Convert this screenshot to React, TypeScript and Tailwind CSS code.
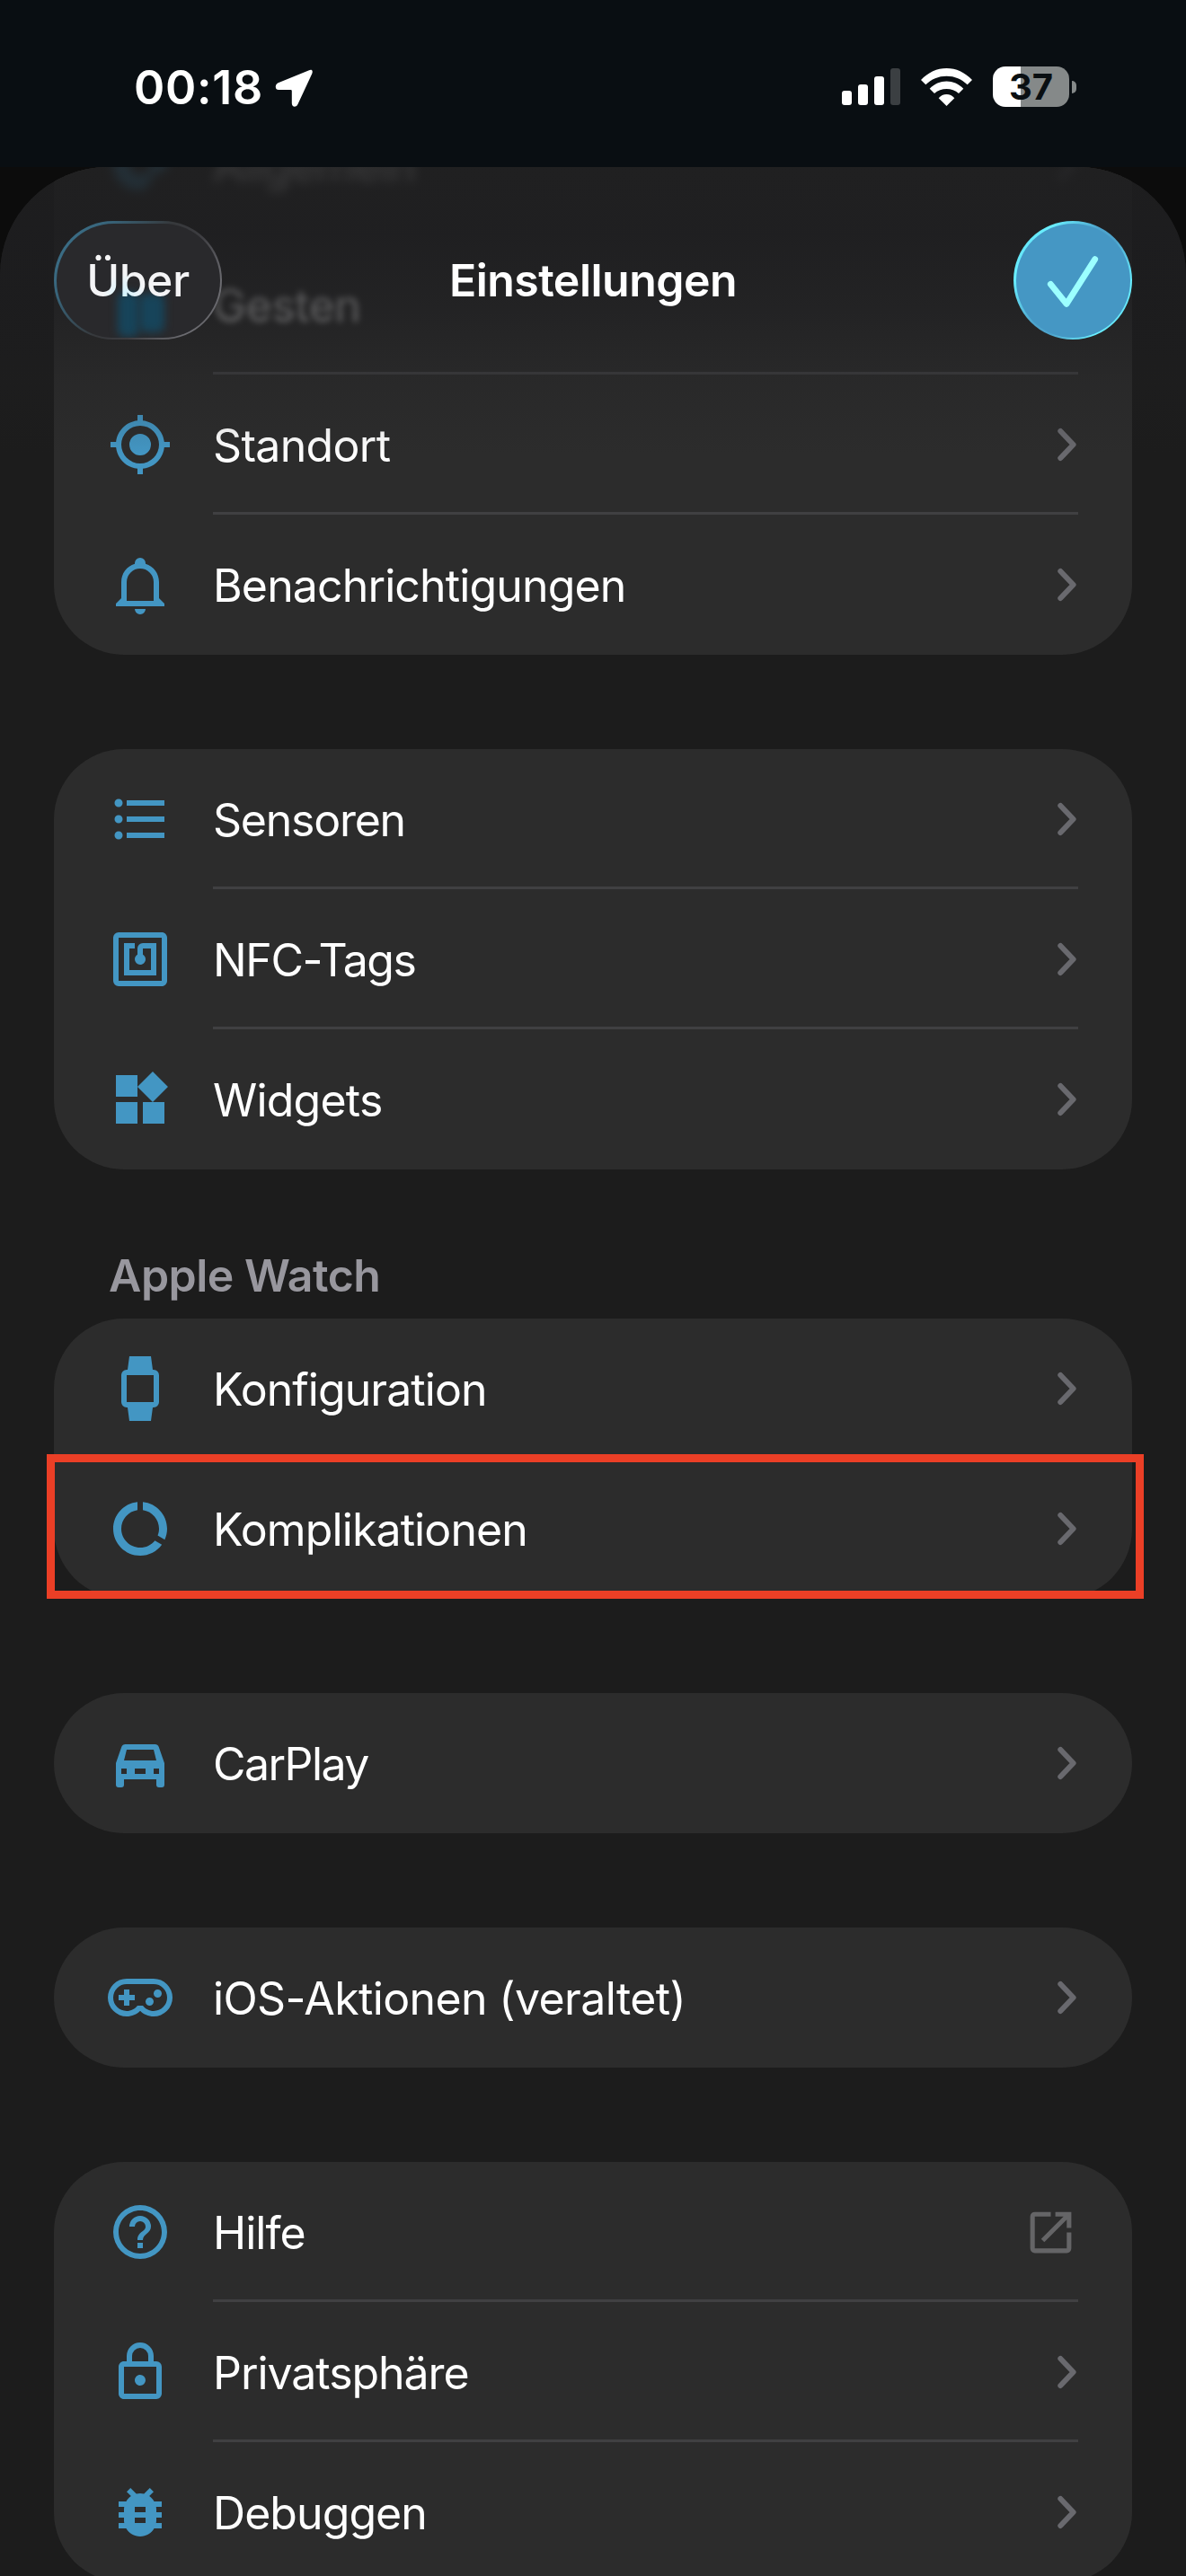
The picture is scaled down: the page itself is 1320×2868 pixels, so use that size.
import type { ReactNode } from "react";

const paths = {
  gps: "M12 8A4 4 0 1 1 12 16A4 4 0 1 1 12 8M3.05 13H1V11H3.05C3.5 6.83 6.83 3.5 11 3.05V1H13V3.05C17.17 3.5 20.5 6.83 20.95 11H23V13H20.95C20.5 17.17 17.17 20.5 13 20.95V23H11V20.95C6.83 20.5 3.5 17.17 3.05 13M12 5A7 7 0 1 0 12 19A7 7 0 1 0 12 5Z",
  bell: "M10 21H14A2 2 0 0 1 12 23A2 2 0 0 1 10 21M21 19V20H3V19L5 17V11C5 7.9 7.03 5.17 10 4.29C10 4.19 10 4.1 10 4A2 2 0 0 1 12 2A2 2 0 0 1 14 4C14 4.1 14 4.19 14 4.29C16.97 5.17 19 7.9 19 11V17L21 19M17 11A5 5 0 0 0 12 6A5 5 0 0 0 7 11V18H17V11Z",
  list: "M7 5H21V7H7V5M7 13V11H21V13H7M4 4.5A1.5 1.5 0 1 1 4 7.5A1.5 1.5 0 1 1 4 4.5M4 10.5A1.5 1.5 0 1 1 4 13.5A1.5 1.5 0 1 1 4 10.5M7 19V17H21V19H7M4 16.5A1.5 1.5 0 1 1 4 19.5A1.5 1.5 0 1 1 4 16.5Z",
  nfc: "M18 6H13A2 2 0 0 0 11 8V10.28C10.41 10.62 10 11.26 10 12A2 2 0 0 0 12 14C13.11 14 14 13.1 14 12C14 11.26 13.6 10.62 13 10.28V8H16V16H8V8H10V6H6V18H18M20 20H4V4H20M20 2H4A2 2 0 0 0 2 4V20A2 2 0 0 0 4 22H20C21.11 22 22 21.1 22 20V4C22 2.89 21.11 2 20 2Z",
  widgets: "M13 13V21H21V13H13M3 21H11V13H3V21M3 3V11H11V3H3M16.66 1.69L11 7.34L16.66 13L22.32 7.34L16.66 1.69Z",
  watch: "M8 0H16L16.67 5H17A2 2 0 0 1 19 7V17A2 2 0 0 1 17 19H16.67L16 24H8L7.33 19H7A2 2 0 0 1 5 17V7A2 2 0 0 1 7 5H7.33L8 0M7 7V17H17V7H7Z",
  donut: "M13 2.05V5.08C16.39 5.57 19 8.47 19 12C19 12.9 18.82 13.75 18.5 14.54L21.12 16.07C21.68 14.83 22 13.45 22 12C22 6.82 18.05 2.55 13 2.05M12 19C8.13 19 5 15.87 5 12C5 8.47 7.61 5.57 11 5.08V2.05C5.94 2.55 2 6.81 2 12C2 17.52 6.47 22 12 22C15.3 22 18.23 20.39 20.05 17.91L17.45 16.38C16.17 17.98 14.21 19 12 19Z",
  car: "M3 12V20A1 1 0 0 0 4 21H5A1 1 0 0 0 6 20V18H18V20A1 1 0 0 0 19 21H20A1 1 0 0 0 21 20V12L18.92 6C18.72 5.42 18.16 5 17.5 5H6.5C5.84 5 5.28 5.42 5.08 6L3 12M7 7H17L18 11H6L7 7M5 14H7V16H5V14M10 14H14V16H10V14M17 14H19V16H17V14Z",
  gamepad: "M6 9H8V11H10V13H8V15H6V13H4V11H6V9M18.5 9A1.5 1.5 0 1 1 18.5 12A1.5 1.5 0 1 1 18.5 9M15.5 12A1.5 1.5 0 1 1 15.5 15A1.5 1.5 0 1 1 15.5 12M17 5A7 7 0 0 1 24 12A7 7 0 0 1 17 19C15.04 19 13.27 18.2 12 16.9C10.73 18.2 8.96 19 7 19A7 7 0 0 1 0 12A7 7 0 0 1 7 5H17M7 7A5 5 0 0 0 2 12A5 5 0 0 0 7 17C8.64 17 10.09 16.21 11 15H13C13.91 16.21 15.36 17 17 17A5 5 0 0 0 22 12A5 5 0 0 0 17 7H7Z",
  help: "M11 18H13V16H11V18M12 2A10 10 0 0 0 2 12A10 10 0 0 0 12 22A10 10 0 0 0 22 12A10 10 0 0 0 12 2M12 20C7.59 20 4 16.41 4 12C4 7.59 7.59 4 12 4C16.41 4 20 7.59 20 12C20 16.41 16.41 20 12 20M12 6A4 4 0 0 0 8 10H10A2 2 0 0 1 12 8A2 2 0 0 1 14 10C14 12 11 11.75 11 15H13C13 12.75 16 12.5 16 10A4 4 0 0 0 12 6Z",
  lock: "M12 17C10.89 17 10 16.1 10 15C10 13.89 10.89 13 12 13A2 2 0 0 1 14 15A2 2 0 0 1 12 17M18 20V10H6V20H18M18 8A2 2 0 0 1 20 10V20A2 2 0 0 1 18 22H6C4.89 22 4 21.1 4 20V10C4 8.89 4.89 8 6 8H7V6A5 5 0 0 1 12 1A5 5 0 0 1 17 6V8H18M12 3A3 3 0 0 0 9 6V8H15V6A3 3 0 0 0 12 3Z",
  bug: "M14 12H10V10H14M14 16H10V14H14M20 8H17.19C16.74 7.22 16.12 6.55 15.37 6.04L17 4.41L15.59 3L13.42 5.17C12.96 5.06 12.5 5 12 5C11.5 5 11.04 5.06 10.59 5.17L8.41 3L7 4.41L8.62 6.04C7.88 6.55 7.26 7.22 6.81 8H4V10H6.09C6.04 10.33 6 10.66 6 11V12H4V14H6V15C6 15.34 6.04 15.67 6.09 16H4V18H6.81C7.85 19.79 9.78 21 12 21C14.22 21 16.15 19.79 17.19 18H20V16H17.91C17.96 15.67 18 15.34 18 15V14H20V12H18V11C18 10.66 17.96 10.33 17.91 10H20V8Z",
  cog: "M12 8A4 4 0 1 0 12 16A4 4 0 1 0 12 8M12 3C17 3 22 7 22 12C22 14 20 15 18 15C16 15.5 16 21 12 21.5C6 21.5 2 17 2 12C2 7 7 3 12 3Z",
  gesture: "M3 5H10V11H11V21H3V5M13 10H21V21H13V10Z",
};

type IconName = keyof typeof paths;

function Icon({ name }: { name: IconName }) {
  return (
    <svg viewBox="0 0 24 24" className="size-[72px] shrink-0 fill-[#4396c3]" fillRule="evenodd">
      <path d={paths[name]} />
    </svg>
  );
}

function Chevron() {
  return (
    <svg viewBox="0 0 24 42" className="h-[42px] w-6 shrink-0" fill="none" stroke="#69696e" strokeWidth="6" strokeLinecap="round" strokeLinejoin="round">
      <path d="M4.3 6L18.6 21L4.3 36" />
    </svg>
  );
}

function OpenInNew() {
  return (
    <svg viewBox="0 0 24 24" className="size-[61px] shrink-0 fill-[#656567]">
      <path d="M5 3H12V5H5V19H19V12H21V19A2 2 0 0 1 19 21H5A2 2 0 0 1 3 19V5A2 2 0 0 1 5 3ZM14 3H21V10H19V6.41L9.17 16.24L7.76 14.83L17.59 5H14Z" />
    </svg>
  );
}

type RowProps = {
  icon: IconName;
  label: string;
  tracking: string;
  last?: boolean;
  external?: boolean;
  faded?: string;
  children?: ReactNode;
};

function Row({ icon, label, tracking, last, external, faded = "", children }: RowProps) {
  return (
    <div className="relative flex h-[156px] shrink-0 pl-[60px] pr-[60px]">
      <div className={`flex items-center ${faded}`}>
        <Icon name={icon} />
      </div>
      <div className={`ml-[45px] flex flex-1 items-center justify-between ${last ? "" : "shadow-[inset_0_-3px_0_#404042]"}`}>
        <span className={`pt-[2px] text-[50px] leading-[60px] whitespace-nowrap text-white ${tracking} ${faded}`}>{label}</span>
        <span className={`flex ${faded}`}>{external ? <OpenInNew /> : <Chevron />}</span>
      </div>
      {children}
    </div>
  );
}

function Card({ children }: { children: ReactNode }) {
  return <section className="flex shrink-0 flex-col rounded-[78px] bg-[#2c2c2c]">{children}</section>;
}

function StatusBar() {
  return (
    <div className="flex h-[186px] items-start justify-between bg-[#090e12] pt-[68px] pr-[122px] pl-[149px]">
      <div className="flex h-[60px] items-center gap-[13px]">
        <span className="text-[52px] leading-[60px] font-semibold tracking-[0.7px] text-white">00:18</span>
        <svg viewBox="0 0 42 42" className="size-[42px] fill-white">
          <path d="M38 1.2L3 15.5Q.5 17 .8 20Q1 23 4 23H17.5Q18.8 23 18.8 24.3V38Q19 41.7 22 41.7Q24.5 41.7 25.5 39L41.3 5Q42.5 1.5 40.5 .8Q39.5 .4 38 1.2Z" />
        </svg>
      </div>
      <div className="flex h-[57px] items-center">
        <div className="mr-[23px] flex h-[41px] items-end gap-[7px]">
          <i className="h-[16px] w-[11px] rounded-[3px] bg-white" />
          <i className="h-[23px] w-[11px] rounded-[3px] bg-white" />
          <i className="h-[32px] w-[11px] rounded-[3px] bg-white" />
          <i className="h-[41px] w-[11px] rounded-[3px] bg-[#3b3f42]" />
        </div>
        <svg viewBox="0 0 57 42" className="mr-[23px] h-[42px] w-[57px] fill-white">
          <path d="M0 13C8 4.5 18 0 28.5 0S49 4.5 57 13L51.7 18.3C45.5 12 37.5 8.7 28.5 8.7S11.5 12 5.3 18.3Z" />
          <path d="M9.7 22.7C15 17.4 21.5 14.5 28.5 14.5S42 17.4 47.3 22.7L42 28C38.3 24.8 33.5 23 28.5 23S18.7 24.8 15 28Z" />
          <path d="M19.7 33.2C22 30.5 25 29 28.5 29S35 30.5 37.3 33.2L28.5 42Z" />
        </svg>
        <div className="mr-[3px] flex h-[45px] w-[85px] items-center justify-center rounded-[14px] bg-[linear-gradient(90deg,#fff_31px,#858989_31px)]">
          <span className="text-[40px] leading-[45px] font-bold text-[#0a0f12]">37</span>
        </div>
        <i className="h-[14px] w-[5px] rounded-r-full bg-[#858989]" />
      </div>
    </div>
  );
}

function Header() {
  return (
    <header className="absolute inset-x-0 top-0 h-[320px] bg-[linear-gradient(180deg,rgba(30,30,31,0.86)_0px,rgba(29,29,31,0.85)_75px,rgba(29,29,31,0.6)_160px,rgba(32,32,34,0.28)_235px,rgba(40,40,42,0)_320px)]">
      <div className="grid grid-cols-[1fr_auto_1fr] items-center px-[60px] pt-[60px]">
        <button className="h-[132px] w-[187px] rounded-full bg-[linear-gradient(125deg,#3d7590_0%,#38647a_22%,#36383b_48%,#3c3c40_62%,#6e6e73_85%,#505054_100%)] p-[2.5px]">
          <span className="relative flex h-full w-full items-center justify-center overflow-hidden rounded-full bg-[#29292c]">
            <i className="absolute top-[76px] left-[68px] h-[50px] w-[24px] rounded-lg bg-[#17445a] blur-[5px]" />
            <i className="absolute top-[78px] left-[92px] h-[43px] w-[28px] rounded-lg bg-[#17445a] blur-[5px]" />
            <span className="relative bg-[radial-gradient(circle_at_42px_46px,#d4f5ff_0px,#f4f4f6_24px)] bg-clip-text text-[50px] leading-[60px] font-medium tracking-[-0.5px] text-transparent">
              Über
            </span>
          </span>
        </button>
        <h1 className="text-[50px] leading-[60px] font-semibold tracking-[-0.52px] text-white">Einstellungen</h1>
        <button className="size-[132px] justify-self-end rounded-full bg-[linear-gradient(125deg,#5ad0ea_0%,#6af0ff_20%,#4da3cc_45%,#4da3cc_58%,#6af0ff_80%,#5ad0ea_100%)] p-[2.5px]">
          <span className="flex h-full w-full items-center justify-center rounded-full bg-[#4597c4]">
            <svg viewBox="0 0 132 132" className="size-[132px] shrink-0" fill="none" stroke="#9cffff" strokeWidth="6.8" strokeLinecap="round" strokeLinejoin="round">
              <path d="M41.3 70.3L59 92.3L90.7 42.7" />
            </svg>
          </span>
        </button>
      </div>
    </header>
  );
}

export default function App() {
  return (
    <div className="flex h-[2868px] w-[1320px] flex-col overflow-hidden bg-[#0c0c0c] font-['Inter',sans-serif]">
      <StatusBar />
      <div className="relative min-h-0 flex-1 overflow-hidden rounded-t-[120px] bg-[#1c1c1c]">
        <main className="-mt-[81px] flex flex-col px-[60px]">
          <Card>
            <Row icon="cog" label="Allgemein" tracking="tracking-[-0.9px]" last faded="blur-[6px]" />
            <Row icon="gesture" label="Gesten" tracking="tracking-[-0.5px]" faded="opacity-70 blur-[3.5px]" />
            <Row icon="gps" label="Standort" tracking="tracking-[-0.67px]" />
            <Row icon="bell" label="Benachrichtigungen" tracking="tracking-[-0.87px]" last />
          </Card>
          <div className="h-[105px] shrink-0" />
          <Card>
            <Row icon="list" label="Sensoren" tracking="tracking-[-1.24px]" />
            <Row icon="nfc" label="NFC-Tags" tracking="tracking-[-1.4px]" />
            <Row icon="widgets" label="Widgets" tracking="tracking-[-0.8px]" last />
          </Card>
          <h2 className="mt-[88px] mb-[18px] ml-[61px] h-[60px] text-[50px] leading-[60px] font-semibold tracking-[-0.5px] text-[#98979e]">
            Apple Watch
          </h2>
          <Card>
            <Row icon="watch" label="Konfiguration" tracking="tracking-[-0.95px]" last />
            <Row icon="donut" label="Komplikationen" tracking="tracking-[-0.89px]" last>
              <div className="absolute -top-[5px] -right-[13px] bottom-0 -left-[8px] border-[9px] border-[#eb3f26]" />
            </Row>
          </Card>
          <div className="h-[105px] shrink-0" />
          <Card>
            <Row icon="car" label="CarPlay" tracking="tracking-[-1.55px]" last />
          </Card>
          <div className="h-[105px] shrink-0" />
          <Card>
            <Row icon="gamepad" label="iOS-Aktionen (veraltet)" tracking="tracking-[-0.62px]" last />
          </Card>
          <div className="h-[105px] shrink-0" />
          <Card>
            <Row icon="help" label="Hilfe" tracking="tracking-[-0.95px]" external />
            <Row icon="lock" label="Privatsphäre" tracking="tracking-[-1.05px]" />
            <Row icon="bug" label="Debuggen" tracking="tracking-[-0.94px]" last />
          </Card>
        </main>
        <Header />
      </div>
    </div>
  );
}
